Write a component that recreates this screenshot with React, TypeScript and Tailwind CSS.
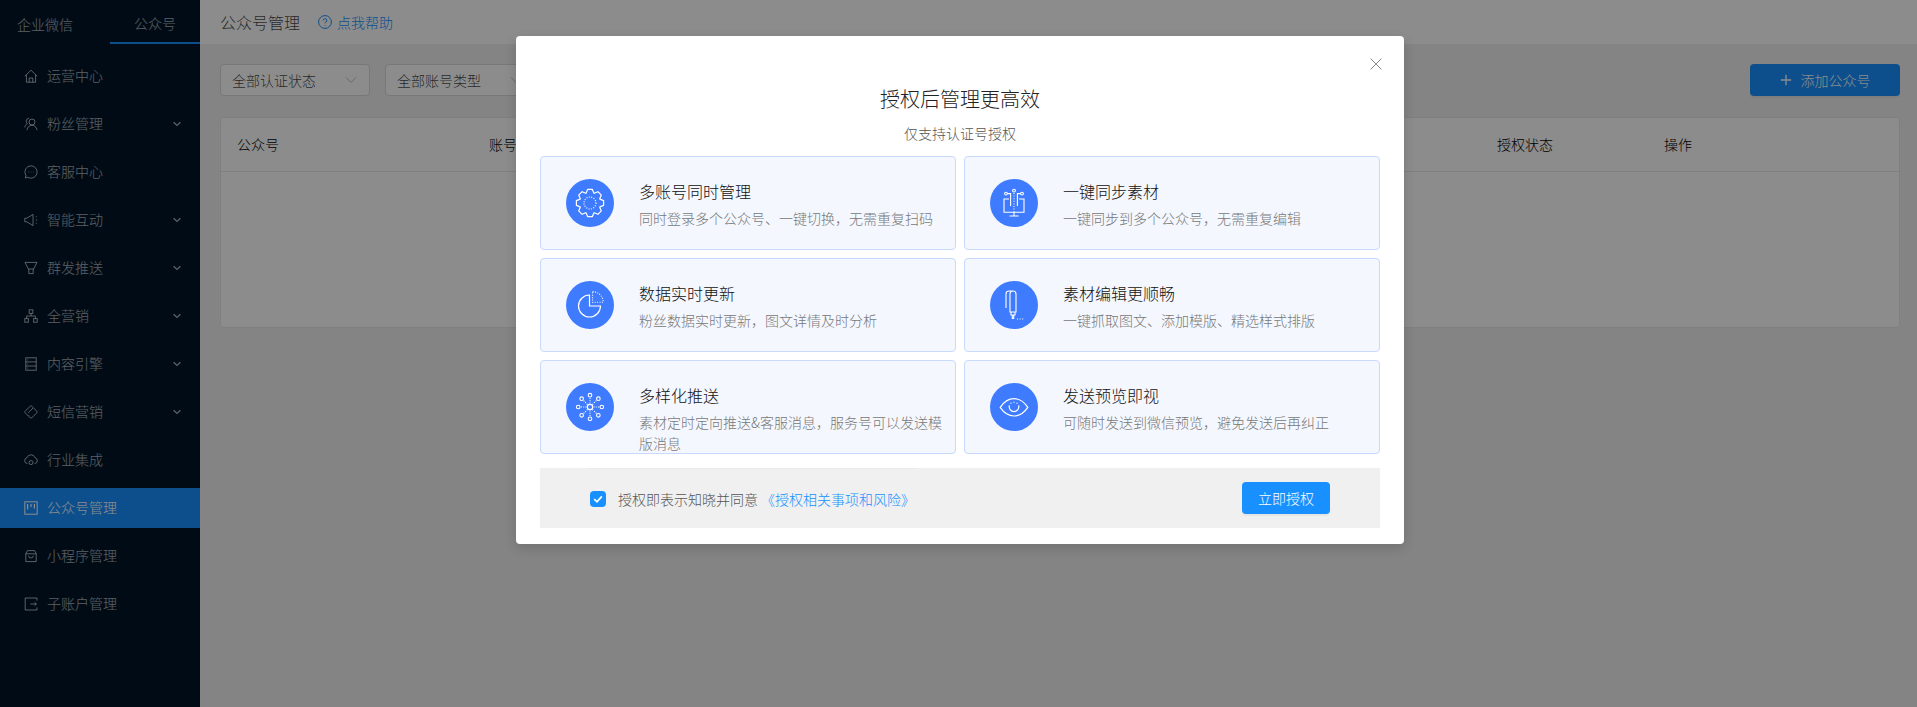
import type { ReactNode } from "react";

// all sidebar glyphs share a 14x14 box
const Glyph = ({ children }: { children: ReactNode }) => (
  <svg viewBox="0 0 14 14" fill="none" stroke="currentColor" strokeWidth="1" className="w-[14px] h-[14px] shrink-0">
    {children}
  </svg>
);

const menu: { label: string; arrow?: boolean; active?: boolean; icon: ReactNode }[] = [
  { label: "运营中心", icon: <path d="M.8 7.2 7 1.2l6.2 6M2.4 5.8v7.4h9.2V5.8M5.2 13.2V9h3.6v4.2" /> },
  {
    label: "粉丝管理",
    arrow: true,
    icon: (
      <>
        <circle cx="8" cy="5" r="3" />
        <path d="M3 13.2c.4-3 2.4-5 5-5s4.6 2 5 5M5 1.2a3 3 0 0 0-1.6 5.4C2 7.4 1 8.8.8 10.4" />
      </>
    ),
  },
  {
    label: "客服中心",
    icon: (
      <>
        <path d="M7 .8a6.2 6.2 0 1 1-3.3 11.5L1.4 13l.5-2.6A6.2 6.2 0 0 1 7 .8Z" />
        <path d="M4.3 7h.6M6.7 7h.6M9.1 7h.6" strokeWidth="1.2" />
      </>
    ),
  },
  {
    label: "智能互动",
    arrow: true,
    icon: (
      <>
        <path d="M.8 5.2v3.6h2L9 12.6V1.4L2.8 5.2Z" />
        <path d="M11.8 3.8h1M11.8 7h1.4M11.8 10.2h1" />
      </>
    ),
  },
  {
    label: "群发推送",
    arrow: true,
    icon: <path d="M1 1.4h12L9.6 8H4.4ZM4.8 8v4.6h4.4V8" />,
  },
  {
    label: "全营销",
    arrow: true,
    icon: (
      <>
        <rect x="5.2" y=".8" width="3.6" height="3.6" />
        <rect x=".8" y="9.6" width="3.6" height="3.6" />
        <rect x="9.6" y="9.6" width="3.6" height="3.6" />
        <path d="M7 4.4V7M2.6 9.6V7h8.8v2.6" />
      </>
    ),
  },
  {
    label: "内容引擎",
    arrow: true,
    icon: (
      <>
        <rect x="1.8" y=".8" width="10.4" height="12.4" />
        <path d="M1.8 4.9h10.4M1.8 9h10.4M3.4 2.9h.8M3.4 7h.8M3.4 11.1h.8" />
      </>
    ),
  },
  {
    label: "短信营销",
    arrow: true,
    icon: (
      <>
        <path d="M7.6 1 13 6.4a.8.8 0 0 1 0 1.2L7.6 13a.8.8 0 0 1-1.2 0L1 7.6a.8.8 0 0 1 0-1.2L6.4 1a.8.8 0 0 1 1.2 0Z" />
        <path d="M9 3 4.2 7.8M4.6 10.2l.6.6" />
      </>
    ),
  },
  {
    label: "行业集成",
    icon: (
      <>
        <path d="M3.4 10.6a3 3 0 0 1-.4-5.9 4.2 4.2 0 0 1 8 0 3 3 0 0 1-.4 5.9" />
        <circle cx="7" cy="9.6" r="2" />
      </>
    ),
  },
  {
    label: "公众号管理",
    active: true,
    icon: (
      <>
        <rect x=".8" y=".8" width="12.4" height="12.4" />
        <path d="M3.6 3v5.6M7 3v3M10.4 3v4.4" strokeWidth="1.2" />
      </>
    ),
  },
  {
    label: "小程序管理",
    icon: <path d="M3.4 1.6h7.2l1.6 3v8H1.8v-8ZM1.8 4.8h10.4M4.6 6.6a2.4 2.4 0 0 0 4.8 0" />,
  },
  {
    label: "子账户管理",
    icon: <path d="M13 3.6V1H1.2v12H13v-2.6M6.4 7h6M10.6 5.4 12.4 7l-1.8 1.6" />,
  },
];

const gearPath = () => {
  const pts: string[] = [];
  for (let i = 0; i < 8; i++) {
    const a = (i * Math.PI) / 4 - Math.PI / 2;
    const step = Math.PI / 8;
    const at = (r: number, t: number) => `${(24 + r * Math.cos(t)).toFixed(2)} ${(24 + r * Math.sin(t)).toFixed(2)}`;
    pts.push(at(10.6, a - step * 0.95), at(13.8, a - step * 0.45), at(13.8, a + step * 0.45), at(10.6, a + step * 0.95));
  }
  return "M" + pts.join("L") + "Z";
};

const nodes = [0, 45, 90, 135, 180, 225, 270, 315].map((deg) => {
  const t = (deg * Math.PI) / 180;
  return { x: 24 + 11.8 * Math.cos(t), y: 24 + 11.8 * Math.sin(t) };
});

const CircleIcon = ({ children }: { children: ReactNode }) => (
  <div className="w-12 h-12 rounded-full bg-[#3f7bff] shrink-0">
    <svg viewBox="0 0 48 48" fill="none" stroke="#fff" strokeWidth="1.1" className="w-12 h-12">
      {children}
    </svg>
  </div>
);

const features: { title: string; desc: string; icon: ReactNode }[] = [
  {
    title: "多账号同时管理",
    desc: "同时登录多个公众号、一键切换，无需重复扫码",
    icon: (
      <>
        <path d={gearPath()} strokeLinejoin="round" strokeWidth="1.2" />
        <circle cx="24" cy="24" r="6" strokeDasharray="1 1.4" />
      </>
    ),
  },
  {
    title: "一键同步素材",
    desc: "一键同步到多个公众号，无需重复编辑",
    icon: (
      <>
        <path d="M19 20h-5v13.2h20V20h-5M24 33.2V37M19.5 37h9M17.6 14.6h3V27M30.4 14.6h-3V27" />
        <path d="M24 14v19" strokeDasharray="1 1.6" />
        <circle cx="24" cy="11.6" r="1.4" />
        <circle cx="16" cy="14.6" r="1.4" />
        <circle cx="32" cy="14.6" r="1.4" />
      </>
    ),
  },
  {
    title: "数据实时更新",
    desc: "粉丝数据实时更新，图文详情及时分析",
    icon: (
      <>
        <path d="M23.5 14a11 11 0 1 0 11 11h-11Z" strokeWidth="1.2" />
        <path d="M26.6 10.6A10.6 10.6 0 0 1 37.2 21.2H26.6Z" strokeDasharray="1 1.4" />
      </>
    ),
  },
  {
    title: "素材编辑更顺畅",
    desc: "一键抓取图文、添加模版、精选样式排版",
    icon: (
      <>
        <path d="M20 31V13a3 3 0 0 1 6 0v18ZM16 27V13a3 3 0 0 1 3-3h4M21 31v3h4v-3M22.3 34v3.5h1.4V34" />
        <path d="M27 38h7" strokeDasharray="1 1.6" strokeWidth="1.2" />
      </>
    ),
  },
  {
    title: "多样化推送",
    desc: "素材定时定向推送&客服消息，服务号可以发送模版消息",
    icon: (
      <>
        <circle cx="24" cy="24" r="2.7" strokeWidth="1.2" />
        {nodes.map((n) => (
          <g key={`${n.x}-${n.y}`}>
            <circle cx={n.x} cy={n.y} r="1.8" />
            <path d={`M${24 + (n.x - 24) * 0.3} ${24 + (n.y - 24) * 0.3}L${24 + (n.x - 24) * 0.82} ${24 + (n.y - 24) * 0.82}`} strokeDasharray="1 1.2" />
          </g>
        ))}
      </>
    ),
  },
  {
    title: "发送预览即视",
    desc: "可随时发送到微信预览，避免发送后再纠正",
    icon: (
      <>
        <path d="M10.2 24.4C14 18.6 19 15.6 24 15.6s10 3 13.8 8.8C34 30 29 33 24 33s-10-3-13.8-8.6Z" strokeWidth="1.2" />
        <path d="M19.4 22.4a4.8 4.8 0 1 0 9.2 0" strokeWidth="1.2" />
        <path d="M21 20v.2M24 19v.2M27 20v.2" strokeWidth="1.2" strokeLinecap="round" />
      </>
    ),
  },
];

const SelectBox = ({ label }: { label: string }) => (
  <div className="w-[150px] h-8 flex items-center justify-between pl-[11px] pr-3 bg-white border border-[#d9d9d9] rounded text-sm text-black/75">
    <span>{label}</span>
    <svg viewBox="0 0 12 12" fill="none" stroke="#bfbfbf" className="w-3 h-3">
      <path d="M1 3.5 6 8.5 11 3.5" />
    </svg>
  </div>
);

export default function App() {
  return (
    <div className="relative flex h-screen overflow-hidden bg-[#f0f0f0] font-light font-['Noto_Sans_CJK_SC',sans-serif]">
      <aside className="w-[200px] shrink-0 bg-[#001529] text-white/65 text-sm">
        <div className="flex justify-between h-11 mb-3">
          <div className="w-[90px] flex items-center justify-center pt-[3px]">企业微信</div>
          <div className="w-[90px] flex items-center justify-center pt-[3px] border-b-2 border-[#1890ff]">公众号</div>
        </div>
        <nav className="flex flex-col gap-2">
          {menu.map((item) => (
            <div
              key={item.label}
              className={`h-10 flex items-center pl-6 pr-[19px] ${item.active ? "bg-[#1890ff] text-white" : ""}`}
            >
              <Glyph>{item.icon}</Glyph>
              <span className="ml-[9px] pb-[2px]">{item.label}</span>
              {item.arrow && (
                <svg viewBox="0 0 8 6" fill="none" stroke="currentColor" strokeWidth="1.4" className="w-2 h-[6px] ml-auto">
                  <path d="M.6 1.2 4 4.4l3.4-3.2" />
                </svg>
              )}
            </div>
          ))}
        </nav>
      </aside>

      <main className="flex-1 min-w-0">
        <header className="h-11 bg-white flex items-center pl-5">
          <span className="text-base text-black/75">公众号管理</span>
          <span className="ml-[18px] flex items-center text-sm text-[#1890ff]">
            <svg viewBox="0 0 14 14" fill="none" stroke="currentColor" className="w-[14px] h-[14px]">
              <circle cx="7" cy="7" r="6.4" />
              <path d="M5.2 5.5a1.8 1.8 0 1 1 2.7 1.5c-.6.4-.9.7-.9 1.4M7 10v.8" />
            </svg>
            <span className="ml-[5px]">点我帮助</span>
          </span>
        </header>

        <div className="pl-5 pr-[17px] pt-5">
          <div className="flex items-center gap-[15px]">
            <SelectBox label="全部认证状态" />
            <SelectBox label="全部账号类型" />
            <button className="ml-auto w-[150px] h-8 flex items-center justify-center rounded bg-[#1890ff] text-sm text-white shadow-[0_2px_0_rgba(0,0,0,0.045)]">
              <svg viewBox="0 0 12 12" fill="none" stroke="currentColor" strokeWidth="1.3" className="w-3 h-3">
                <path d="M6 .8v10.4M.8 6h10.4" />
              </svg>
              <span className="ml-[9px]">添加公众号</span>
            </button>
          </div>

          <div className="mt-[21px] h-[211px] bg-white border border-[#e8e8e8] rounded-sm">
            <div className="h-[54px] grid grid-cols-[252px_1008px_167px_1fr] items-center pl-4 pb-[2px] border-b border-[#e8e8e8] text-sm text-black">
              <span>公众号</span>
              <span>账号</span>
              <span>授权状态</span>
              <span>操作</span>
            </div>
          </div>
        </div>
      </main>

      {/* modal mask */}
      <div className="absolute inset-0 bg-black/45 flex justify-center items-start pt-9 pl-[3px]">
        <div className="relative w-[888px] h-[508px] bg-white rounded shadow-[0_4px_12px_rgba(0,0,0,0.15)] px-6 pt-[49px]">
          <button className="absolute top-[22px] right-[22px] text-[#8c8c8c]">
            <svg viewBox="0 0 12 12" fill="none" stroke="currentColor" className="w-3 h-3 block">
              <path d="M.5.5l11 11M11.5.5l-11 11" />
            </svg>
          </button>

          <h2 className="text-xl leading-7 text-center text-[#222]">授权后管理更高效</h2>
          <p className="mt-[9px] text-sm leading-[22px] text-center text-[#555]">仅支持认证号授权</p>

          <div className="mt-[12px] grid grid-cols-2 gap-2">
            {features.map((f) => (
              <div key={f.title} className="h-[94px] flex border border-[#c8d9fb] rounded bg-[#f4f7fe] pl-[25px]">
                <div className="h-full flex items-center">
                  <CircleIcon>{f.icon}</CircleIcon>
                </div>
                <div className="ml-[25px] w-[312px] pt-[22px]">
                  <div className="text-base leading-6 text-[#111]">{f.title}</div>
                  <div className="mt-[5px] text-sm leading-[21px] text-[#777]">{f.desc}</div>
                </div>
              </div>
            ))}
          </div>

          <div className="mt-[14px] h-[60px] bg-[#f0f0f0] flex items-center justify-between px-[50px]">
            <div className="h-full flex items-center border-t border-[#e8e8e8] text-sm text-[#555] whitespace-nowrap">
              <span className="w-4 h-4 flex items-center justify-center rounded-sm bg-[#1890ff]">
                <svg viewBox="0 0 10 10" fill="none" stroke="#fff" strokeWidth="1.8" className="w-[10px] h-[10px]">
                  <path d="M1.2 5.2 4 7.8l4.8-5.4" />
                </svg>
              </span>
              <span className="ml-3">授权即表示知晓并同意</span>
              <span className="ml-[3px] text-[#1890ff]">《授权相关事项和风险》</span>
            </div>
            <button className="w-[88px] h-8 rounded bg-[#1890ff] text-sm text-white shadow-[0_2px_0_rgba(0,0,0,0.045)]">
              立即授权
            </button>
          </div>
        </div>
      </div>
    </div>
  );
}
